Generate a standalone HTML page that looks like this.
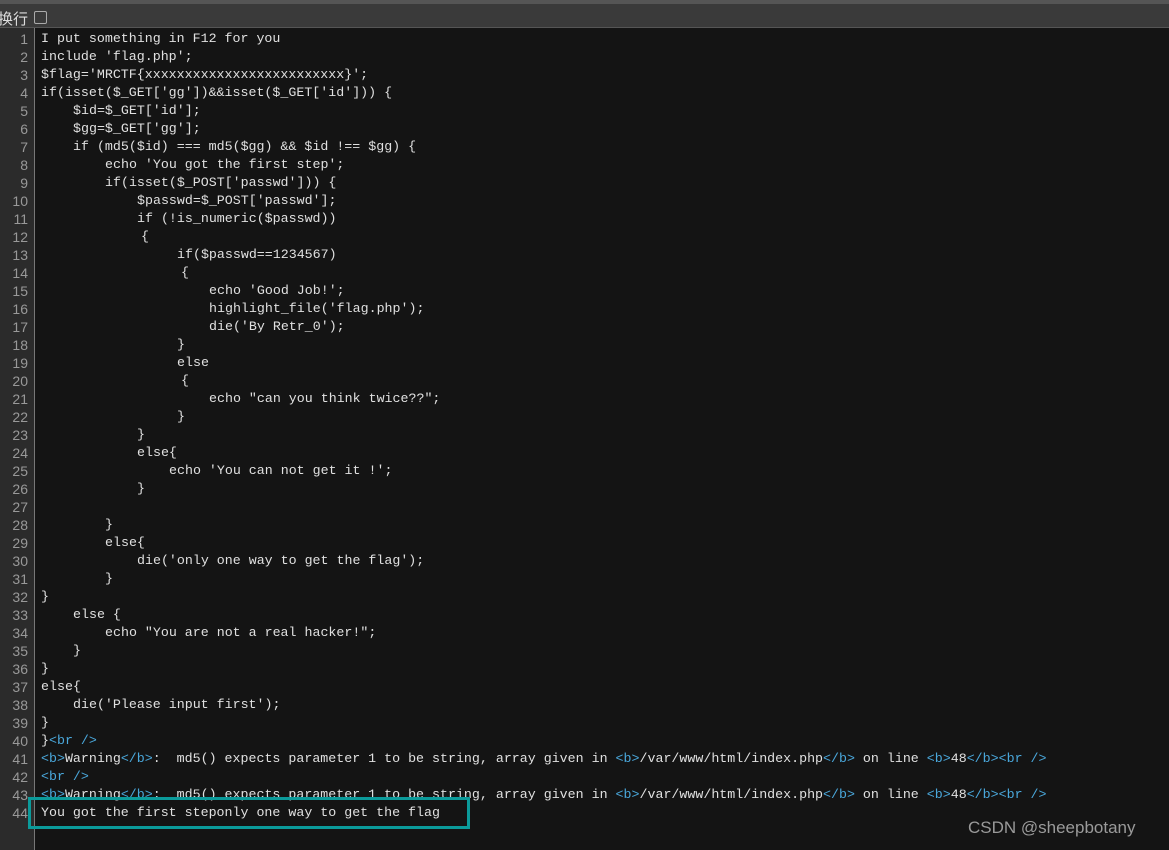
<!DOCTYPE html>
<html><head><meta charset="utf-8"><style>
body{margin:0;width:1169px;height:850px;background:#141414;overflow:hidden;position:relative;font-family:"Liberation Mono","Noto Sans CJK SC",monospace;}
#top{position:absolute;left:0;top:0;width:1169px;height:28px;background:#3a3a3a;border-top:4px solid #555;box-sizing:border-box;border-bottom:1px solid #555}
#top span{position:absolute;left:-2px;top:4px;font:15px "Noto Sans CJK SC",sans-serif;color:#ddd}
#cb{position:absolute;left:34px;top:7px;width:11px;height:11px;border:1px solid #aaa;border-radius:2px}
#gut{position:absolute;left:0;top:28px;width:34px;height:822px;background:#2b2b2b;border-right:1px solid #777}
.n{position:absolute;right:6px;width:30px;text-align:right;color:#999;font:14px "Liberation Sans",sans-serif;}
.l{position:absolute;white-space:pre;color:#e0e0e0;font-size:13.3px;line-height:18px}
.t{color:#4aa8dc}
#box{position:absolute;left:28px;top:797px;width:436px;height:26px;border:3px solid #0b9a9a}
#wm{position:absolute;left:968px;top:818px;font:17px "Liberation Sans",sans-serif;color:#9a9a9a}
</style></head><body>
<div id="top"><span>换行</span><div id="cb"></div></div>
<div id="gut"></div>
<div id="lines"></div>
<div id="box"></div>
<div id="wm">CSDN @sheepbotany</div>
<script>
var L=[
[0,"I put something in F12 for you"],
[0,"include 'flag.php';"],
[0,"$flag='MRCTF{xxxxxxxxxxxxxxxxxxxxxxxxx}';"],
[0,"if(isset($_GET['gg'])&&isset($_GET['id'])) {"],
[32,"$id=$_GET['id'];"],
[32,"$gg=$_GET['gg'];"],
[32,"if (md5($id) === md5($gg) && $id !== $gg) {"],
[64,"echo 'You got the first step';"],
[64,"if(isset($_POST['passwd'])) {"],
[96,"$passwd=$_POST['passwd'];"],
[96,"if (!is_numeric($passwd))"],
[100,"{"],
[136,"if($passwd==1234567)"],
[140,"{"],
[168,"echo 'Good Job!';"],
[168,"highlight_file('flag.php');"],
[168,"die('By Retr_0');"],
[136,"}"],
[136,"else"],
[140,"{"],
[168,"echo \"can you think twice??\";"],
[136,"}"],
[96,"}"],
[96,"else{"],
[128,"echo 'You can not get it !';"],
[96,"}"],
[0,""],
[64,"}"],
[64,"else{"],
[96,"die('only one way to get the flag');"],
[64,"}"],
[0,"}"],
[32,"else {"],
[64,"echo \"You are not a real hacker!\";"],
[32,"}"],
[0,"}"],
[0,"else{"],
[32,"die('Please input first');"],
[0,"}"],
[0,"}<T>&lt;br /&gt;</T>"],
[0,"<T>&lt;b&gt;</T>Warning<T>&lt;/b&gt;</T>:  md5() expects parameter 1 to be string, array given in <T>&lt;b&gt;</T>/var/www/html/index.php<T>&lt;/b&gt;</T> on line <T>&lt;b&gt;</T>48<T>&lt;/b&gt;&lt;br /&gt;</T>"],
[0,"<T>&lt;br /&gt;</T>"],
[0,"<T>&lt;b&gt;</T>Warning<T>&lt;/b&gt;</T>:  md5() expects parameter 1 to be string, array given in <T>&lt;b&gt;</T>/var/www/html/index.php<T>&lt;/b&gt;</T> on line <T>&lt;b&gt;</T>48<T>&lt;/b&gt;&lt;br /&gt;</T>"],
[0,"You got the first steponly one way to get the flag"]];
var h="",g="";
for(var i=0;i<L.length;i++){var y=30+i*18;
g+='<div class="n" style="top:'+(y+1)+'px">'+(i+1)+'</div>';
var s=L[i][1];if(s.indexOf("<T>")<0){s=s.replace(/&/g,"&amp;").replace(/</g,"&lt;");}
s=s.replace(/<T>/g,'<span class="t">').replace(/<\/T>/g,'</span>');
h+='<div class="l" style="top:'+y+'px;left:'+(41+L[i][0])+'px">'+s+'</div>';}
document.getElementById("gut").innerHTML=g.replace(/top:(\d+)/g,function(m,a){return "top:"+(a-28)});
document.getElementById("lines").innerHTML=h;
</script>
</body></html>
